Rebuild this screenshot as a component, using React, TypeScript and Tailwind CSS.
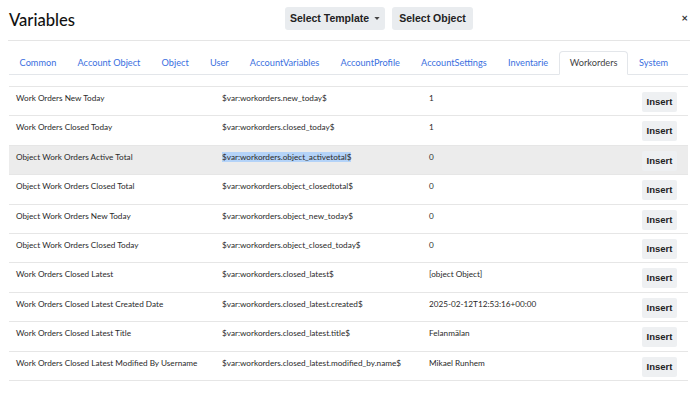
import React from "react";

const rows = [
  ["Work Orders New Today", "$var:workorders.new_today$", "1"],
  ["Work Orders Closed Today", "$var:workorders.closed_today$", "1"],
  ["Object Work Orders Active Total", "$var:workorders.object_activetotal$", "0"],
  ["Object Work Orders Closed Total", "$var:workorders.object_closedtotal$", "0"],
  ["Object Work Orders New Today", "$var:workorders.object_new_today$", "0"],
  ["Object Work Orders Closed Today", "$var:workorders.object_closed_today$", "0"],
  ["Work Orders Closed Latest", "$var:workorders.closed_latest$", "[object Object]"],
  ["Work Orders Closed Latest Created Date", "$var:workorders.closed_latest.created$", "2025-02-12T12:53:16+00:00"],
  ["Work Orders Closed Latest Title", "$var:workorders.closed_latest.title$", "Felanmälan"],
  ["Work Orders Closed Latest Modified By Username", "$var:workorders.closed_latest.modified_by.name$", "Mikael Runhem"],
];

const tabs = [
  "Common",
  "Account Object",
  "Object",
  "User",
  "AccountVariables",
  "AccountProfile",
  "AccountSettings",
  "Inventarie",
  "Workorders",
  "System",
];

export default function App() {
  return (
    <div
      className="w-[690px] h-[396px] bg-white overflow-hidden text-[#333]"
      style={{ fontFamily: 'Lato, sans-serif' }}
    >
      {/* header */}
      <div className="ml-[8px] h-[41px] border-b border-[#e5e5e5] flex items-center relative">
        <div className="pl-[1px] text-[16.6px] leading-none text-[#111] font-medium">Variables</div>
        <div className="absolute left-[277px] top-[7px] flex gap-[7px]" style={{ fontFamily: '"Liberation Sans", Arial, sans-serif' }}>
          <button className="h-[23px] w-[100px] rounded-[3px] bg-[#e9ecef] text-[10.5px] font-bold text-[#222] flex items-center justify-center gap-[5px]">
            Select Template
            <svg width="6" height="3" viewBox="0 0 7 4"><path d="M0 0h7L3.5 4z" fill="#444" /></svg>
          </button>
          <button className="h-[23px] w-[81px] rounded-[3px] bg-[#e9ecef] text-[10.5px] font-bold text-[#222]">
            Select Object
          </button>
        </div>
        <div className="absolute right-[2px] top-[12px] text-[11px] font-bold text-[#333] leading-none">×</div>
      </div>

      {/* tabs */}
      <div className="ml-[9px] mr-[2px] mt-[10px] h-[24px] border-b border-[#e3e6ea] flex items-end whitespace-nowrap">
        {tabs.map((t) =>
          t === "Workorders" ? (
            <div
              key={t}
              className="h-[24px] -mb-px px-[10px] flex items-center text-[9.2px] text-[#444] bg-white border border-[#e3e6ea] border-b-white rounded-t-[4px]"
            >
              {t}
            </div>
          ) : (
            <div key={t} className="h-[23px] px-[10.6px] flex items-center text-[9.2px] text-[#3a6fe0]">
              {t}
            </div>
          )
        )}
      </div>

      {/* table */}
      <div className="ml-[9px] mr-[2px] mt-[11px] border-t border-[#e6e6e6]">
        {rows.map((r, i) => (
          <div
            key={i}
            className={`flex border-b border-[#e6e6e6] pt-[5px] pb-[3.4px] text-[8.2px] leading-[12px] whitespace-nowrap text-[#2a2a2a] ${i === 2 ? "bg-[#ececec]" : ""}`}
          >
            <div className="w-[206px] pl-[7px]">{r[0]}</div>
            <div className="w-[207px] pl-[7px]">
              {i === 2 ? <span className="bg-[#b4d3f8]">{r[1]}</span> : r[1]}
            </div>
            <div className="flex-1 pl-[7px]">{r[2]}</div>
            <div className="w-[60px] pr-[11px] flex justify-end">
              <button
                className="h-[20px] w-[35px] rounded-[2px] bg-[#eef0f2] text-[9.5px] font-bold text-[#222]"
                style={{ fontFamily: '"Liberation Sans", Arial, sans-serif' }}
              >
                Insert
              </button>
            </div>
          </div>
        ))}
      </div>
    </div>
  );
}
